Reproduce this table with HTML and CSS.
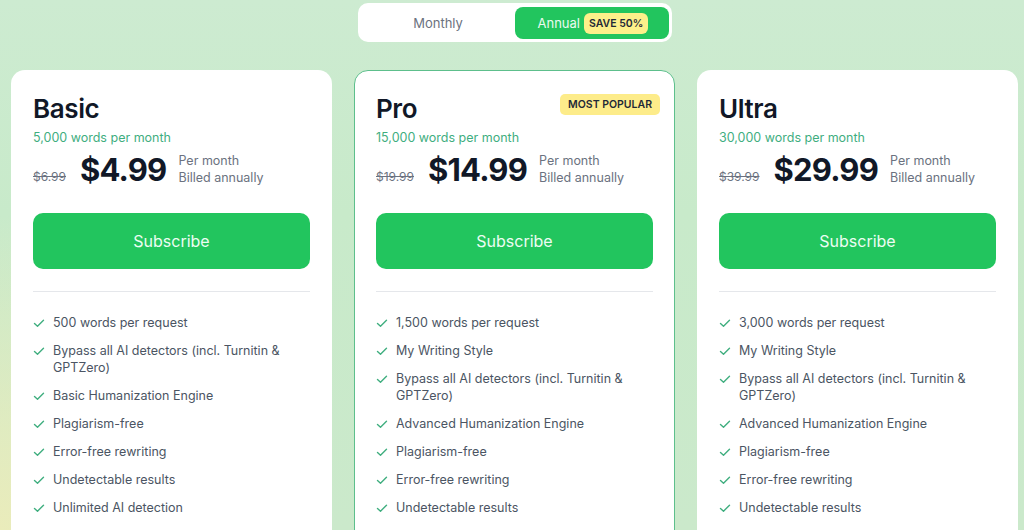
FILE: index.html
```html
<!DOCTYPE html>
<html lang="en">
<head>
<meta charset="utf-8">
<title>Pricing</title>
<link rel="stylesheet" href="styles.css">
</head>
<body>
<div class="page">
  <div class="toggle-wrap">
    <div class="toggle">
      <div class="opt">Monthly</div>
      <div class="opt active">Annual <span class="save">SAVE 50%</span></div>
    </div>
  </div>
  <div class="cards">
    <div class="card">
      <div class="head"><h2>Basic</h2></div>
      <div class="words">5,000 words per month</div>
      <div class="price-row">
        <span class="old">$6.99</span>
        <span class="price">$4.99</span>
        <span class="per">Per month<br>Billed annually</span>
      </div>
      <button class="sub">Subscribe</button>
      <hr class="div">
      <ul class="feats">
        <li><svg viewBox="0 0 12 12"><polyline points="1.5,6.5 4.5,9.2 10.5,3.2"/></svg><span>500 words per request</span></li>
        <li><svg viewBox="0 0 12 12"><polyline points="1.5,6.5 4.5,9.2 10.5,3.2"/></svg><span>Bypass all AI detectors (incl. Turnitin &amp; GPTZero)</span></li>
        <li><svg viewBox="0 0 12 12"><polyline points="1.5,6.5 4.5,9.2 10.5,3.2"/></svg><span>Basic Humanization Engine</span></li>
        <li><svg viewBox="0 0 12 12"><polyline points="1.5,6.5 4.5,9.2 10.5,3.2"/></svg><span>Plagiarism-free</span></li>
        <li><svg viewBox="0 0 12 12"><polyline points="1.5,6.5 4.5,9.2 10.5,3.2"/></svg><span>Error-free rewriting</span></li>
        <li><svg viewBox="0 0 12 12"><polyline points="1.5,6.5 4.5,9.2 10.5,3.2"/></svg><span>Undetectable results</span></li>
        <li><svg viewBox="0 0 12 12"><polyline points="1.5,6.5 4.5,9.2 10.5,3.2"/></svg><span>Unlimited AI detection</span></li>
      </ul>
    </div>
    <div class="card pro">
      <div class="head"><h2>Pro</h2><span class="popular">MOST POPULAR</span></div>
      <div class="words">15,000 words per month</div>
      <div class="price-row">
        <span class="old">$19.99</span>
        <span class="price">$14.99</span>
        <span class="per">Per month<br>Billed annually</span>
      </div>
      <button class="sub">Subscribe</button>
      <hr class="div">
      <ul class="feats">
        <li><svg viewBox="0 0 12 12"><polyline points="1.5,6.5 4.5,9.2 10.5,3.2"/></svg><span>1,500 words per request</span></li>
        <li><svg viewBox="0 0 12 12"><polyline points="1.5,6.5 4.5,9.2 10.5,3.2"/></svg><span>My Writing Style</span></li>
        <li><svg viewBox="0 0 12 12"><polyline points="1.5,6.5 4.5,9.2 10.5,3.2"/></svg><span>Bypass all AI detectors (incl. Turnitin &amp; GPTZero)</span></li>
        <li><svg viewBox="0 0 12 12"><polyline points="1.5,6.5 4.5,9.2 10.5,3.2"/></svg><span>Advanced Humanization Engine</span></li>
        <li><svg viewBox="0 0 12 12"><polyline points="1.5,6.5 4.5,9.2 10.5,3.2"/></svg><span>Plagiarism-free</span></li>
        <li><svg viewBox="0 0 12 12"><polyline points="1.5,6.5 4.5,9.2 10.5,3.2"/></svg><span>Error-free rewriting</span></li>
        <li><svg viewBox="0 0 12 12"><polyline points="1.5,6.5 4.5,9.2 10.5,3.2"/></svg><span>Undetectable results</span></li>
      </ul>
    </div>
    <div class="card">
      <div class="head"><h2>Ultra</h2></div>
      <div class="words">30,000 words per month</div>
      <div class="price-row">
        <span class="old">$39.99</span>
        <span class="price">$29.99</span>
        <span class="per">Per month<br>Billed annually</span>
      </div>
      <button class="sub">Subscribe</button>
      <hr class="div">
      <ul class="feats">
        <li><svg viewBox="0 0 12 12"><polyline points="1.5,6.5 4.5,9.2 10.5,3.2"/></svg><span>3,000 words per request</span></li>
        <li><svg viewBox="0 0 12 12"><polyline points="1.5,6.5 4.5,9.2 10.5,3.2"/></svg><span>My Writing Style</span></li>
        <li><svg viewBox="0 0 12 12"><polyline points="1.5,6.5 4.5,9.2 10.5,3.2"/></svg><span>Bypass all AI detectors (incl. Turnitin &amp; GPTZero)</span></li>
        <li><svg viewBox="0 0 12 12"><polyline points="1.5,6.5 4.5,9.2 10.5,3.2"/></svg><span>Advanced Humanization Engine</span></li>
        <li><svg viewBox="0 0 12 12"><polyline points="1.5,6.5 4.5,9.2 10.5,3.2"/></svg><span>Plagiarism-free</span></li>
        <li><svg viewBox="0 0 12 12"><polyline points="1.5,6.5 4.5,9.2 10.5,3.2"/></svg><span>Error-free rewriting</span></li>
        <li><svg viewBox="0 0 12 12"><polyline points="1.5,6.5 4.5,9.2 10.5,3.2"/></svg><span>Undetectable results</span></li>
      </ul>
    </div>
  </div>
</div>
</body>
</html>
```
FILE: styles.css
```css
* { box-sizing: border-box; }
html, body { margin: 0; height: 100%; }
body {
  font-family: Inter, "Noto Sans", sans-serif;
  color: #111827;
  overflow: hidden;
  background:
    radial-gradient(ellipse 420px 420px at 0% 100%, rgba(236,236,186,0.95), rgba(236,236,186,0) 75%),
    linear-gradient(180deg, #cdebd1 0%, #c8eaca 40%, #cbe9cb 100%);
}
.page {
  padding: 3px 6px 0 11px;
}
.toggle-wrap {
  display: flex;
  justify-content: center;
}
.toggle {
  display: flex;
  width: 314px;
  height: 39px;
  padding: 4px 3px 3px 4px;
  background: #ffffff;
  border-radius: 10px;
}
.opt {
  flex: none;
  width: 153px;
  display: flex;
  align-items: center;
  justify-content: center;
  font-size: 13px;
  color: #6b7280;
  border-radius: 8px;
}
.opt.active {
  width: 154px;
  background: #22c55e;
  color: #eafaf0;
  gap: 4px;
  justify-content: flex-start;
  padding-left: 23px;
}
.save {
  background: #fdf08a;
  color: #1f2937;
  font-size: 10.5px;
  font-weight: 600;
  padding: 0 5px;
  height: 21px;
  line-height: 21px;
  border-radius: 6px;
}
.cards {
  display: flex;
  gap: 22px;
  margin-top: 28px;
}
.card {
  width: 321px;
  height: 480px;
  background: #ffffff;
  border-radius: 14px;
  padding: 22px 21px 0 21px;
  border: 1px solid transparent;
}
.card.pro { border-color: #5dbf8c; }
.head {
  display: flex;
  justify-content: space-between;
  align-items: flex-start;
  height: 32px;
}
h2 {
  margin: 0;
  font-size: 26px;
  line-height: 32px;
  font-weight: 600;
  letter-spacing: -0.4px;
  color: #111827;
}
.popular {
  background: #fdec8a;
  color: #1f2937;
  font-size: 10.5px;
  font-weight: 600;
  height: 21px;
  line-height: 21px;
  margin-top: 1px;
  padding: 0 8px;
  border-radius: 5px;
  margin-right: -7px;
}
.words {
  margin-top: 5px;
  font-size: 12.5px;
  line-height: 16px;
  color: #3fae7f;
}
.price-row {
  display: flex;
  align-items: center;
  margin-top: 3px;
  height: 40px;
}
.old {
  font-size: 12px;
  color: #6b7280;
  text-decoration: line-through;
  align-self: flex-end;
  margin-bottom: 5px;
  margin-right: 14px;
}
.price {
  font-size: 31px;
  font-weight: 700;
  letter-spacing: -0.8px;
  color: #111827;
  margin-right: 12px;
}
.per {
  font-size: 12.5px;
  line-height: 17.5px;
  color: #6b7280;
}
.sub {
  display: block;
  width: 100%;
  height: 56px;
  margin-top: 24px;
  border: 0;
  border-radius: 10px;
  background: #22c55e;
  color: #ecfdf3;
  font-family: inherit;
  font-size: 16px;
  font-weight: 400;
}
.div {
  margin: 22px 0 0 0;
  border: 0;
  border-top: 1px solid #e5e7eb;
}
.feats {
  list-style: none;
  margin: 22px 0 0 0;
  padding: 0;
  display: flex;
  flex-direction: column;
  gap: 11px;
}
.feats li {
  display: flex;
  align-items: flex-start;
  gap: 8px;
  font-size: 12.5px;
  line-height: 17px;
  color: #4b5563;
}
.feats svg {
  flex: none;
  width: 12px;
  height: 12px;
  margin-top: 3px;
  fill: none;
  stroke: #3fae7f;
  stroke-width: 1.4;
  stroke-linecap: round;
  stroke-linejoin: round;
}
```
